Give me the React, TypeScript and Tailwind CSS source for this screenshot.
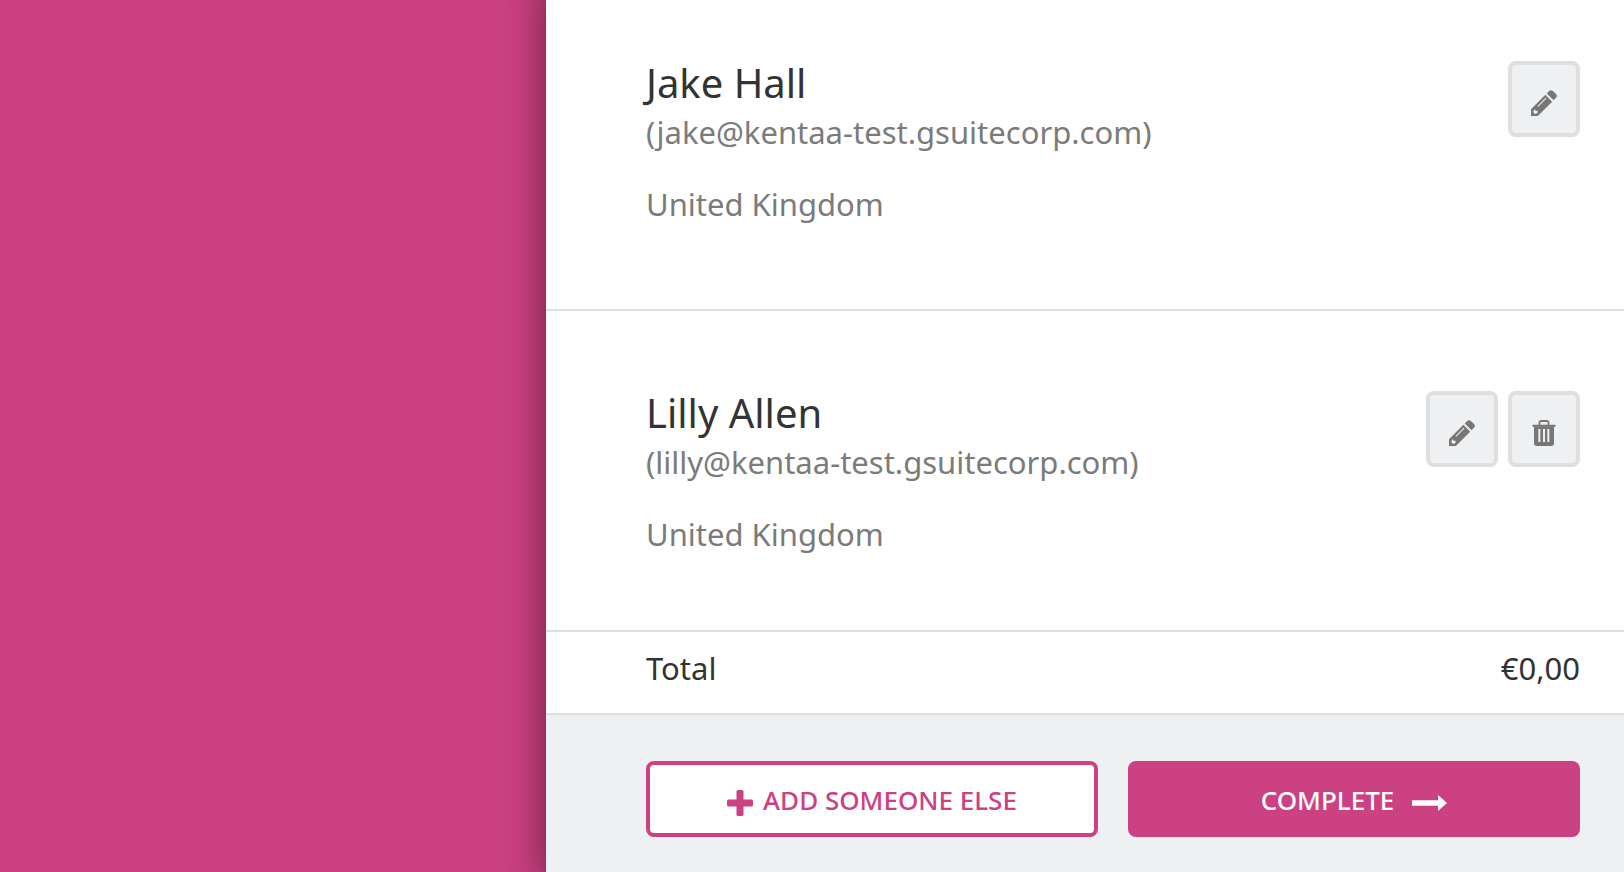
import type { ReactNode } from "react";

type Person = {
  name: string;
  email: string;
  country: string;
  removable: boolean;
};

const people: Person[] = [
  {
    name: "Jake Hall",
    email: "jake@kentaa-test.gsuitecorp.com",
    country: "United Kingdom",
    removable: false,
  },
  {
    name: "Lilly Allen",
    email: "lilly@kentaa-test.gsuitecorp.com",
    country: "United Kingdom",
    removable: true,
  },
];

function PencilIcon() {
  return (
    <svg viewBox="0 0 76 76" className="h-[26px] w-[26px]" fill="currentColor" aria-hidden="true">
      <path
        fillRule="evenodd"
        d="M0 76V56L42 14L62 34L20 76ZM19 47L21 49L45 25L43 23ZM11 56L6 64L12 70L19 67L19 61L14 61Z"
      />
      <path d="M46 10L53 3Q58 -2 64 3L73 12Q78 18 73 23L66 30Z" />
    </svg>
  );
}

function TrashIcon() {
  return (
    <svg viewBox="0 0 70 78" className="h-[26px] w-6" fill="currentColor" aria-hidden="true">
      <path d="M19 15V8Q19 0 27 0H43Q51 0 51 8V15H46V9Q46 6 43 6H27Q24 6 24 9V15Z" />
      <path d="M2 14H68Q70 14 70 17Q70 20 68 20H2Q0 20 0 17Q0 14 2 14Z" />
      <path
        fillRule="evenodd"
        d="M5 19H65V70Q65 78 57 78H13Q5 78 5 70ZM18 27V66H24V27ZM32 27V66H38V27ZM45 27V66H51V27Z"
      />
    </svg>
  );
}

function PlusIcon() {
  return (
    <svg viewBox="0 0 26 26" className="h-[26px] w-[26px]" fill="currentColor" aria-hidden="true">
      <rect x="9.5" y="0" width="7" height="26" rx="1.6" />
      <rect x="0" y="9.5" width="26" height="7" rx="1.6" />
    </svg>
  );
}

function ArrowIcon() {
  return (
    <svg viewBox="0 0 35 16" className="h-4 w-[35px]" fill="currentColor" aria-hidden="true">
      <path d="M0 5.2H26V0L35 8L26 16V10.8H0Z" />
    </svg>
  );
}

function IconButton({ label, children }: { label: string; children: ReactNode }) {
  return (
    <button
      type="button"
      aria-label={label}
      className="flex h-[76px] w-[72px] items-center justify-center rounded-lg border-4 border-[#dedfe1] bg-[#eff0f2] pt-[7px] text-[#777777]"
    >
      {children}
    </button>
  );
}

function PersonRow({ person }: { person: Person }) {
  return (
    <li className="flex items-start justify-between border-b-2 border-[#dedfe0] pt-20 pr-11 pb-[81px] pl-[100px] last:pb-[72px]">
      <div>
        <h2 className="text-[40px] leading-[44px] text-[#333333]">{person.name}</h2>
        <p className="mt-[3px] text-[31px] leading-[48px]">({person.email})</p>
        <p className="mt-6 text-[31px] leading-[48px]">{person.country}</p>
      </div>
      <div className="flex gap-[10px]">
        <IconButton label={`Edit ${person.name}`}>
          <PencilIcon />
        </IconButton>
        {person.removable && (
          <IconButton label={`Remove ${person.name}`}>
            <TrashIcon />
          </IconButton>
        )}
      </div>
    </li>
  );
}

export default function App() {
  return (
    <div className="flex min-h-screen overflow-hidden bg-[#cc4182] font-['Noto_Sans',sans-serif]">
      <aside className="w-[546px] shrink-0" />
      <main className="-mt-[19px] -mb-4 flex min-w-0 grow flex-col bg-white text-[#7b7b7b] shadow-[0_0_40px_rgba(0,0,0,0.5)]">
        <ul>
          {people.map((person) => (
            <PersonRow key={person.email} person={person} />
          ))}
        </ul>

        <div className="flex justify-between border-b-2 border-[#dedfe0] pt-3 pr-11 pb-[21px] pl-[100px] text-[31px] leading-[48px] text-[#333333]">
          <span>Total</span>
          <span>€0,00</span>
        </div>

        <div className="grid grow grid-cols-2 content-start gap-[30px] bg-[#eff0f2] pt-[46px] pr-11 pb-[35px] pl-[100px] text-[26px] font-medium">
          <button
            type="button"
            className="flex h-[76px] items-center justify-center gap-[10px] rounded-lg border-4 border-[#cc4182] bg-white pt-[3px] text-[#cc4182]"
          >
            <span className="pt-1">
              <PlusIcon />
            </span>
            ADD SOMEONE ELSE
          </button>
          <button
            type="button"
            className="flex h-[76px] items-center justify-center gap-[18px] rounded-lg bg-[#cc4182] pt-[3px] text-white"
          >
            COMPLETE
            <span className="pt-1">
              <ArrowIcon />
            </span>
          </button>
        </div>
      </main>
    </div>
  );
}
